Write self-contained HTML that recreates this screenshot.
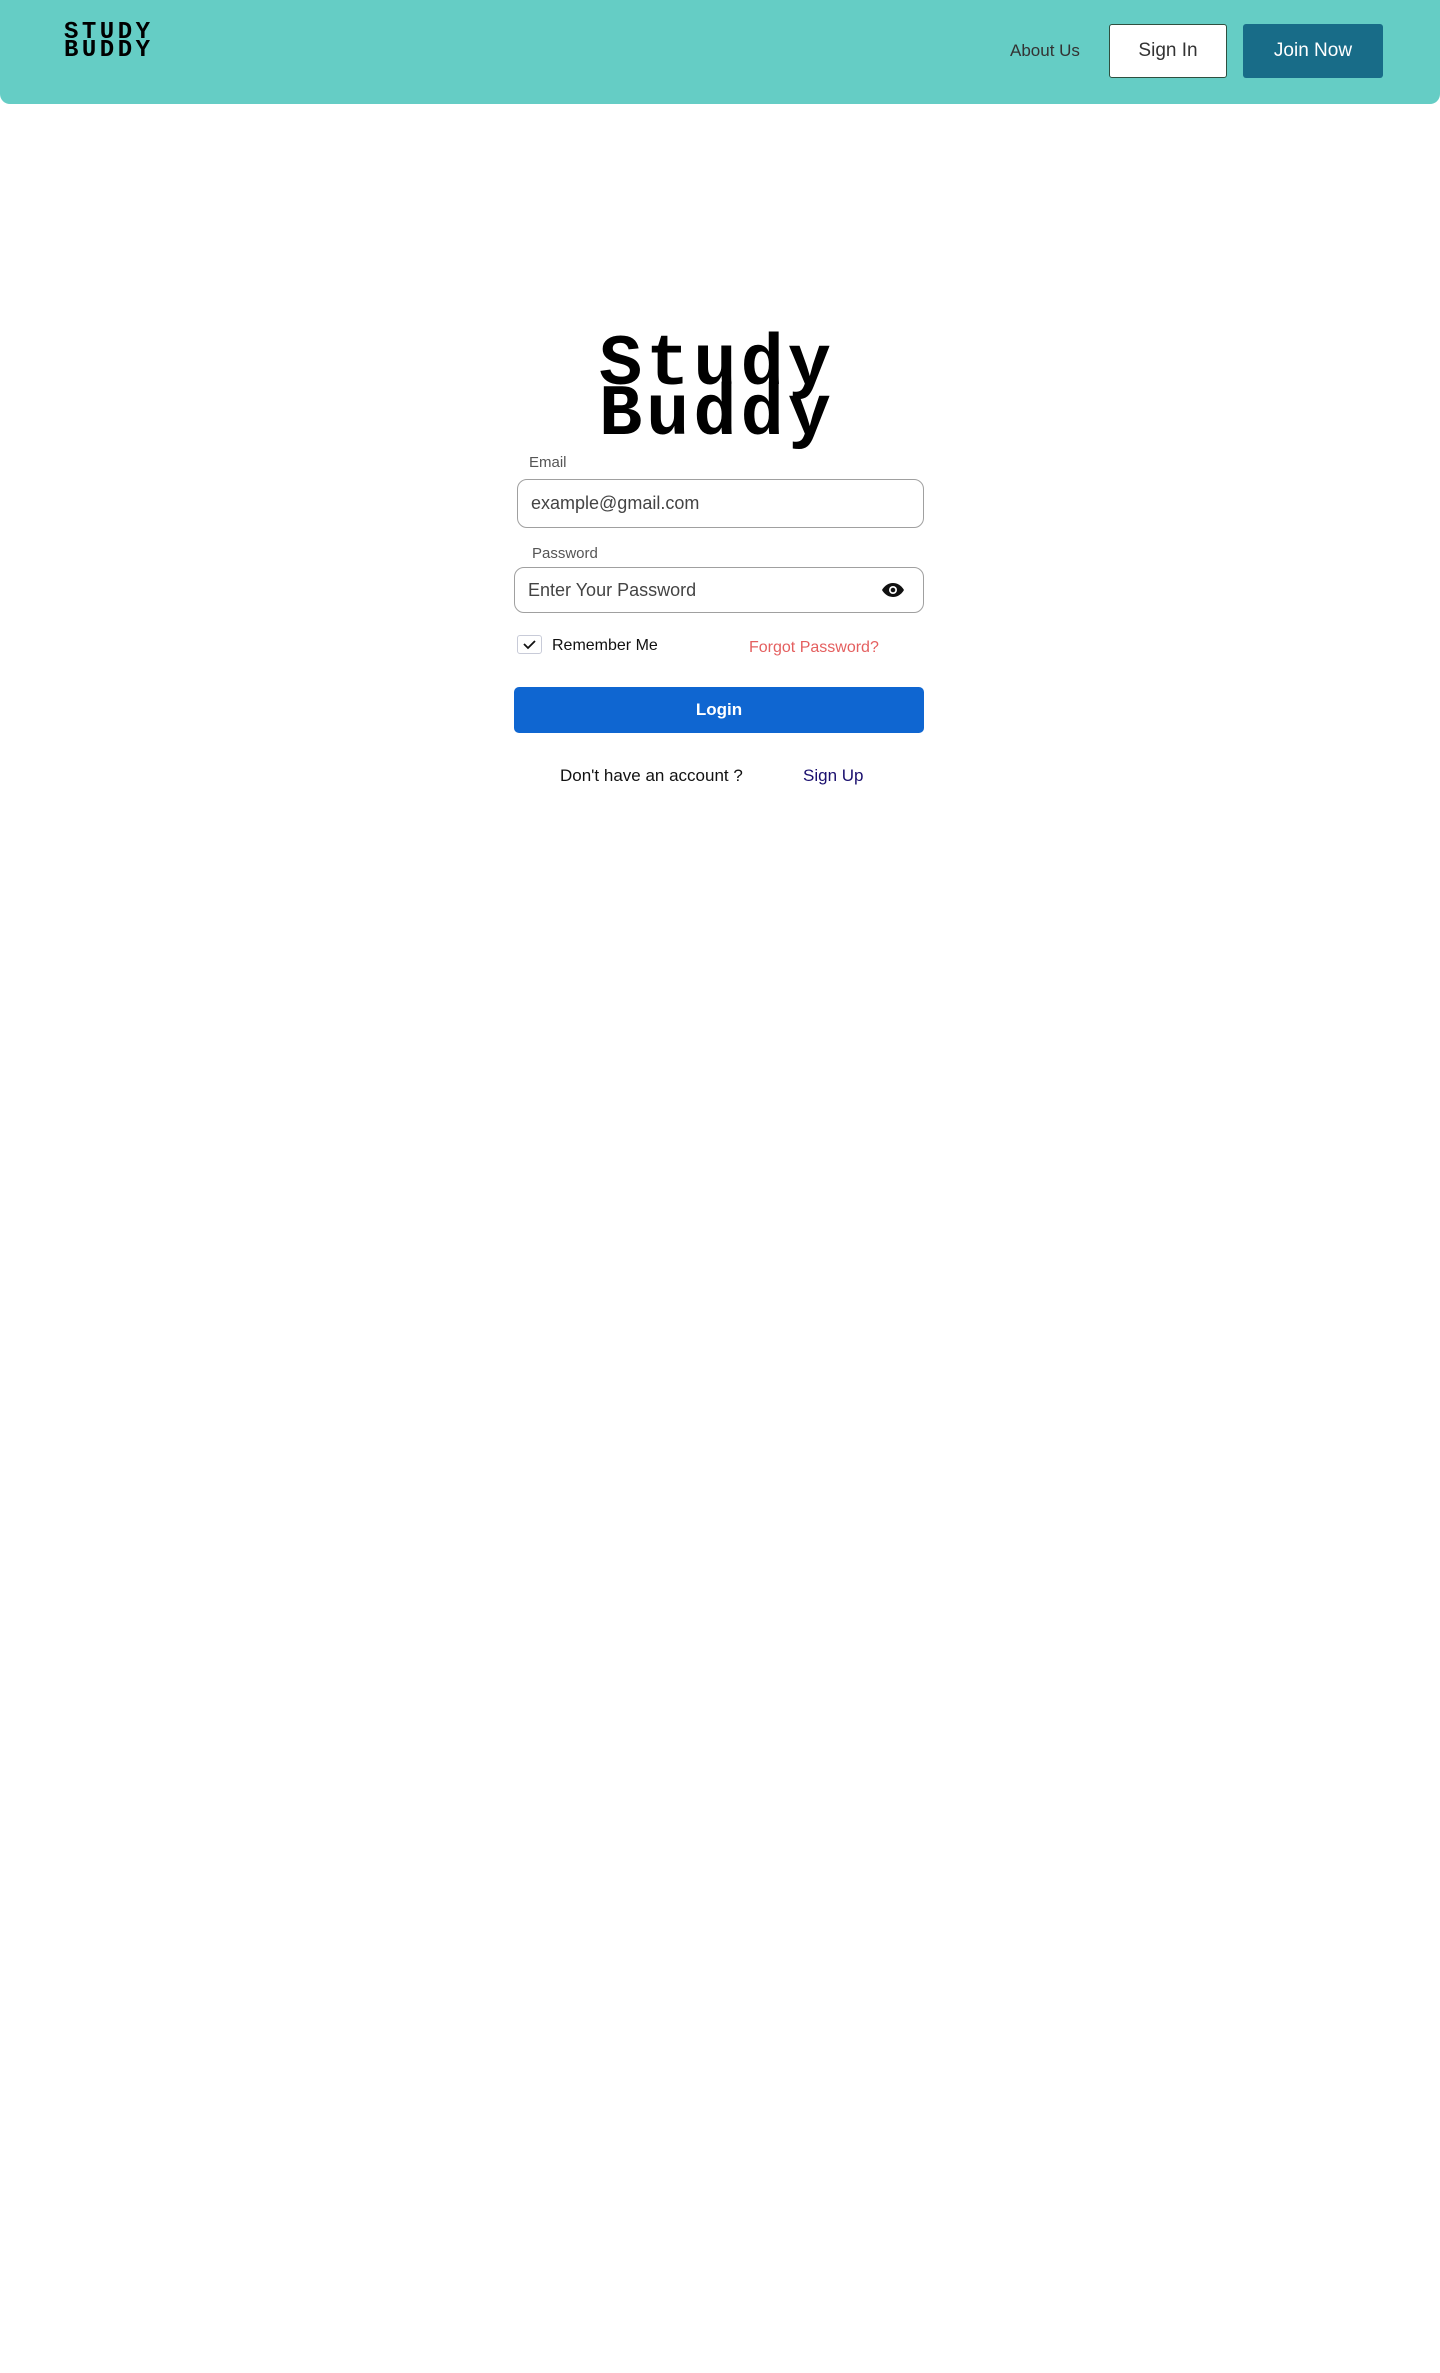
<!DOCTYPE html>
<html><head><style>
*{margin:0;padding:0;box-sizing:border-box}
body{width:1440px;height:2373px;background:#fff;font-family:"Liberation Sans",sans-serif;position:relative;overflow:hidden}
.hdr{position:absolute;left:0;top:0;width:1440px;height:104px;background:#65cdc5;border-radius:0 0 10px 10px}
.abs{position:absolute}
.logo{left:64px;top:24px;font-family:"Liberation Mono",monospace;font-weight:bold;font-size:24px;line-height:18px;letter-spacing:3.5px;color:#000}
.btn{position:absolute;top:23px;height:54px;display:flex;align-items:center;justify-content:center;font-size:19px;border-radius:3px}
.big{left:592px;top:340px;width:250px;text-align:center;font-family:"Liberation Mono",monospace;font-weight:bold;font-size:72px;line-height:50px;letter-spacing:4px;color:#000}
.lbl{font-size:15px;color:#555}
.inp{position:absolute;border:1.5px solid #a0a0a0;border-radius:10px;font-size:18px;color:#444;display:flex;align-items:center;padding-left:13px}
</style></head><body>
<div class="hdr"></div>
<div class="abs logo">STUDY<br>BUDDY</div>
<div class="abs" style="left:1010px;top:41px;font-size:17px;color:#333">About Us</div>
<div class="btn" style="left:1109px;width:118px;background:#fff;border:1.5px solid #2f4f3f;color:#333;top:24px">Sign In</div>
<div class="btn" style="left:1243px;width:140px;background:#186c88;color:#fff;top:24px">Join Now</div>

<div class="abs big">Study<br>Buddy</div>
<div class="abs lbl" style="left:529px;top:454px">Email</div>
<div class="inp" style="left:517px;top:479px;width:407px;height:49px">example@gmail.com</div>
<div class="abs lbl" style="left:532px;top:545px">Password</div>
<div class="inp" style="left:514px;top:567px;width:410px;height:46px;padding-left:13px">Enter Your Password
<svg style="position:absolute;right:18px;top:14px" width="24" height="16" viewBox="0 0 24 16"><path d="M1 8C4 3 8 1 12 1s8 2 11 7c-3 5-7 7-11 7S4 13 1 8z" fill="#111"/><circle cx="12" cy="8" r="4" fill="#fff"/><circle cx="12" cy="8" r="2.3" fill="#111"/></svg></div>
<div class="abs" style="left:517px;top:635px;width:25px;height:19px;border:1px solid #c8cbd8;border-radius:3px"><svg width="23" height="17" viewBox="0 0 23 17"><path d="M6 8l4 4 7-7" stroke="#111" stroke-width="1.8" fill="none"/></svg></div>
<div class="abs" style="left:552px;top:637px;font-size:16px;color:#111">Remember Me</div>
<div class="abs" style="left:749px;top:639px;font-size:16px;color:#e45f5f">Forgot Password?</div>
<div class="abs" style="left:514px;top:687px;width:410px;height:46px;background:#0f66d1;border-radius:5px;color:#fff;font-weight:bold;font-size:17px;display:flex;align-items:center;justify-content:center">Login</div>
<div class="abs" style="left:560px;top:766px;font-size:17px;color:#111">Don't have an account ?</div>
<div class="abs" style="left:803px;top:766px;font-size:17px;color:#1a0f6e">Sign Up</div>
</body></html>
